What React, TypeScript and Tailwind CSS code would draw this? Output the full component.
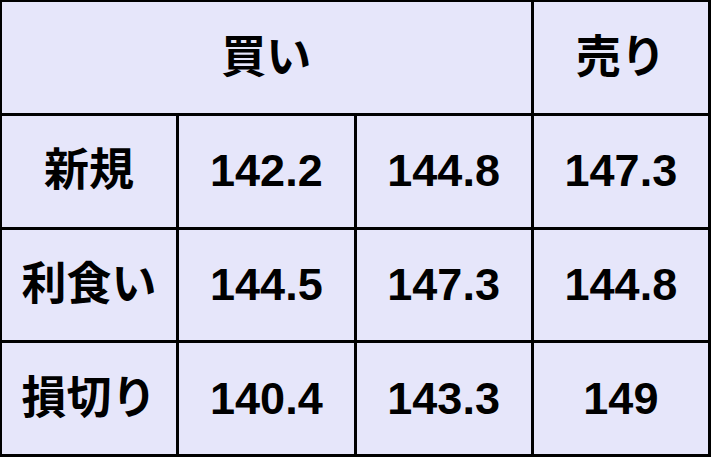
import { Fragment } from "react";

const rows = [
  { label: "新規", values: ["142.2", "144.8", "147.3"] },
  { label: "利食い", values: ["144.5", "147.3", "144.8"] },
  { label: "損切り", values: ["140.4", "143.3", "149"] },
];

function Cell({ children, className = "" }: { children: React.ReactNode; className?: string }) {
  return (
    <div className={`flex items-center justify-center bg-[#e6e6fa] ${className}`}>
      {children}
    </div>
  );
}

export default function App() {
  return (
    <div className="h-[457px] w-[711px] bg-white font-['Liberation_Sans','Noto_Sans_CJK_JP',sans-serif] text-[45px] font-bold text-black">
      <div className="grid h-full w-full grid-cols-4 grid-rows-4 gap-[3px] bg-black pt-[2px] pl-[2px] pr-[3px] pb-[3px]">
        <Cell className="col-span-3 font-semibold">買い</Cell>
        <Cell className="font-semibold">売り</Cell>
        {rows.map((row) => (
          <Fragment key={row.label}>
            <Cell className="font-semibold">{row.label}</Cell>
            {row.values.map((v, i) => (
              <Cell key={i}>{v}</Cell>
            ))}
          </Fragment>
        ))}
      </div>
    </div>
  );
}
